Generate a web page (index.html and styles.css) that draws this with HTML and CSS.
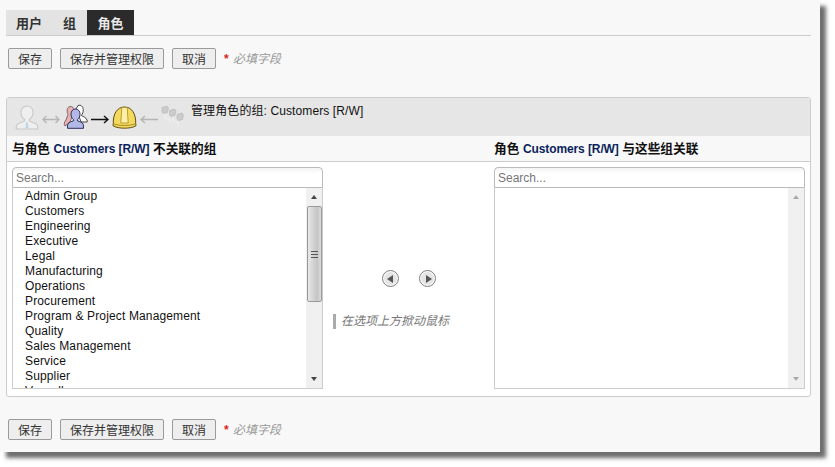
FILE: index.html
```html
<!DOCTYPE html>
<html lang="zh">
<head>
<meta charset="utf-8">
<title>管理角色的组</title>
<link rel="stylesheet" href="styles.css">
</head>
<body>
<div class="page">
  <div class="tabs">
    <a class="tab tab-users">用户</a>
    <a class="tab tab-groups">组</a>
    <a class="tab tab-active">角色</a>
  </div>
  <div class="actions actions-top">
    <button class="btn btn-s">保存</button>
    <button class="btn btn-l">保存并管理权限</button>
    <button class="btn btn-s">取消</button>
    <span class="req"><span class="star">*</span><em>必填字段</em></span>
  </div>
  <section class="panel">
    <header class="panel-head">
      <div class="icons">
        <svg class="ic" width="24" height="25" viewBox="0 0 24 25"><path d="M12 1c3.800 0 6 3 6 6.500 0 3-1.700 5.600-3.600 6.800v1.800c2.200.9 7.200 2 8 4.400.3 1 .4 2.200.4 3.500H1.200c0-1.300.1-2.500.4-3.500.8-2.400 5.800-3.500 8-4.400v-1.800C7.700 13.100 6 10.500 6 7.500 6 4 8.200 1 12 1z" fill="#efefef" stroke="#c8c8c8" stroke-width="1.100"/><path d="M11 17.500h2l.5 6h-3z" fill="#bcd6ea"/></svg>
        <svg class="ic ic-arrow" width="18" height="9" viewBox="0 0 18 9"><path d="M4.500 1 1 4.500 4.500 8M13.500 1 17 4.500 13.500 8M1 4.500h16" fill="none" stroke="#b5b5b5" stroke-width="1.300"/></svg>
        <svg class="ic" width="25" height="26" viewBox="0 0 25 26"><path d="M5 10.500C3.500 8 3.800 3 7 2.500c2.500-.4 4 1.500 4 4l-3 9c-1 2.500-3 4.500-6 6.500-1.500-2-.5-4.500 1-6z" fill="#eeb0ae" stroke="#555" stroke-width=".8"/><path d="M15 1.500c3-1 5 1 5.200 4 .2 2.500-.6 4.500-2 6 2 1 5 2 5.800 4.500.3 1 .3 1.500.2 2h-6L13 5z" fill="#fff" stroke="#333" stroke-width=".9"/><path d="M12.500 5c3 0 4.500 2.500 4.500 5.200 0 2.300-1 4.300-2.500 5.300v1.300c2 .7 5 1.500 5.700 3.500.3 1 .3 2.500.3 4H4.500c0-1.500 0-3 .3-4 .7-2 3.700-2.800 5.700-3.500v-1.300C9 14.500 8 12.500 8 10.200 8 7.500 9.500 5 12.500 5z" fill="#b3b9e6" stroke="#2b2e5c" stroke-width="1"/></svg>
        <svg class="ic ic-arrow" width="18" height="9" viewBox="0 0 18 9"><path d="M13 1l4 3.500L13 8M0 4.500h16.500" fill="none" stroke="#111" stroke-width="1.400"/></svg>
        <svg class="ic" width="25" height="23" viewBox="0 0 25 23"><path d="M1.300 17.500C1 8 5 1 12.500 1S24 8 23.700 17.500c.4 1 .3 2 0 2.500-3 1.500-7 2.200-11.200 2.200S4.300 21.500 1.300 20c-.3-.5-.4-1.500 0-2.500z" fill="#f3d95e" stroke="#5f4e10" stroke-width="1"/><path d="M9.800 1.500h5.400l1 15.500H8.800z" fill="#fdf0a6" stroke="#a88f24" stroke-width=".8"/><path d="M2 18c5.500 2 15.500 2 21 0" fill="none" stroke="#a88f24" stroke-width="1"/></svg>
        <svg class="ic ic-arrow" width="18" height="9" viewBox="0 0 18 9"><path d="M5 1 1 4.500 5 8M1.500 4.500H18" fill="none" stroke="#b5b5b5" stroke-width="1.300"/></svg>
        <svg class="ic" width="24" height="24" viewBox="0 0 24 24"><g fill="#cbcbcb" stroke="#b5b5b5" stroke-width=".6"><path d="M1 2.500 6 1l1.500 2-1 4.500-4 1L1 7z"/><path d="M8.500 5.500l5-1.500 1.500 2-1 4.500-4 1-1.500-1.500z"/><path d="M16 9.500l5-1.500 1.500 2-1 4.500-4 1-1.500-1.500z"/></g><path d="M4 9v4l5 2v3M12 12v4l5 2v4" fill="none" stroke="#ededed" stroke-width="1.500"/></svg>
      </div>
      <h2 class="panel-title">管理角色的组: Customers [R/W]</h2>
    </header>
    <div class="col-titles">
      <h3>与角色 <span class="navy">Customers [R/W]</span> 不关联的组</h3>
      <h3>角色 <span class="navy">Customers [R/W]</span> 与这些组关联</h3>
    </div>
    <div class="shuttle">
      <div class="picker">
        <input class="search" type="text" placeholder="Search...">
        <div class="listbox">
          <ul class="items">
            <li>Admin Group</li>
            <li>Customers</li>
            <li>Engineering</li>
            <li>Executive</li>
            <li>Legal</li>
            <li>Manufacturing</li>
            <li>Operations</li>
            <li>Procurement</li>
            <li>Program &amp; Project Management</li>
            <li>Quality</li>
            <li>Sales Management</li>
            <li>Service</li>
            <li>Supplier</li>
            <li>Vassall</li>
          </ul>
          <div class="scrollbar">
            <span class="sb-arrow sb-up"></span>
            <div class="thumb"><span class="grip"></span></div>
            <span class="sb-arrow sb-down"></span>
          </div>
        </div>
      </div>
      <div class="mover">
        <div class="move-btns">
          <span class="round"><span class="tri tri-left"></span></span>
          <span class="round"><span class="tri tri-right"></span></span>
        </div>
        <p class="hint">在选项上方掀动鼠标</p>
      </div>
      <div class="picker">
        <input class="search" type="text" placeholder="Search...">
        <div class="listbox">
          <ul class="items"></ul>
          <div class="scrollbar scrollbar-off">
            <span class="sb-arrow sb-up"></span>
            <span class="sb-arrow sb-down"></span>
          </div>
        </div>
      </div>
    </div>
  </section>
  <div class="actions actions-bottom">
    <button class="btn btn-s">保存</button>
    <button class="btn btn-l">保存并管理权限</button>
    <button class="btn btn-s">取消</button>
    <span class="req"><span class="star">*</span><em>必填字段</em></span>
  </div>
</div>
</body>
</html>
```
FILE: styles.css
```css
* { box-sizing: border-box; }
html, body { margin: 0; padding: 0; background: #fff; }
body {
  width: 835px;
  height: 467px;
  overflow: hidden;
  font-family: "Liberation Sans", "Noto Sans CJK SC", sans-serif;
  font-size: 12px;
  color: #222;
}
.page {
  width: 820px;
  height: 452px;
  padding: 10px 9px 0 6px;
  background: #f8f8f8;
  box-shadow: 6px 6px 4px #6e6e6e;
}
.tabs {
  display: flex;
  height: 26px;
  border-bottom: 1px solid #ccc;
}
.tab {
  display: flex;
  align-items: center;
  justify-content: center;
  height: 25px;
  font-size: 13px;
  font-weight: bold;
  color: #333;
  background: #e3e3e3;
}
.tab-users { width: 46px; }
.tab-groups { width: 35px; }
.tab-active { width: 47px; background: #2b2b2b; color: #e8e8e8; }
.actions {
  display: flex;
  align-items: center;
  height: 21px;
  padding-left: 2px;
  gap: 8px;
}
.actions-top { margin-top: 12px; }
.actions-bottom { margin-top: 22px; }
.btn {
  height: 21px;
  padding: 3px 0 0;
  border: 1px solid #9a9a9a;
  border-radius: 2px;
  background: #eee;
  color: #333;
  font-family: inherit;
  font-size: 12px;
  line-height: 15px;
}
.btn-s { width: 44px; }
.btn-l { width: 104px; }
.req { display: flex; align-items: center; color: #999; }
.star { color: #d22; font-weight: bold; width: 9px; }
.req em { font-style: italic; font-size: 12px; line-height: 15px; margin-top: 2px; color: #999; }
.panel {
  height: 300px;
  margin-top: 28px;
  border: 1px solid #ccc;
  border-radius: 3px;
  background: #fff;
}
.panel-head {
  display: flex;
  height: 38px;
  padding: 6px 0 0 8px;
  background: #e6e6e6;
  border-radius: 2px 2px 0 0;
}
.icons { display: flex; align-items: center; height: 26px; gap: 3px; }
.ic { flex: none; display: block; }
.ic-arrow { margin-top: 5px; }
.panel-title {
  margin: 0 0 0 6px;
  font-size: 12px;
  font-weight: normal;
  line-height: 15px;
  letter-spacing: .1px;
  color: #111;
}
.col-titles {
  display: grid;
  grid-template-columns: 482px 1fr;
  height: 26px;
  padding: 5px 5px 0;
  background: #f8f8f8;
  border-bottom: 1px solid #ccc;
}
.col-titles h3 {
  margin: 0;
  font-size: 12.700px;
  font-weight: bold;
  line-height: 17px;
  color: #111;
}
.navy { color: #0b1f5c; font-size: 12px; letter-spacing: -.1px; }
.shuttle {
  display: grid;
  grid-template-columns: 311px 171px 311px;
  padding: 5px 5px 0;
}
.picker { display: flex; flex-direction: column; }
.search {
  display: block;
  width: 311px;
  height: 21px;
  padding: 0 3px;
  border: 1px solid #bbb;
  border-radius: 4px 4px 0 0;
  background: linear-gradient(#f4f4f4, #fff 30%);
  font-family: inherit;
  font-size: 12px;
  outline: none;
}
.search::placeholder { color: #777; opacity: 1; }
.listbox {
  display: flex;
  height: 201px;
  border: 1px solid #ccc;
  border-top: 0;
  overflow: hidden;
}
.items {
  flex: 1;
  margin: 0;
  padding: 1px 0 0 12px;
  list-style: none;
  overflow: hidden;
  letter-spacing: .14px;
  color: #111;
}
.items li { height: 15px; line-height: 15px; white-space: nowrap; }
.scrollbar {
  display: flex;
  flex-direction: column;
  align-items: center;
  flex: none;
  width: 16px;
  background: #f0f0f0;
}
.sb-arrow {
  flex: none;
  width: 0;
  height: 0;
  margin: 7px 0;
  border-left: 3.500px solid transparent;
  border-right: 3.500px solid transparent;
}
.sb-up { border-bottom: 4px solid #444; }
.sb-down { border-top: 4px solid #444; margin-top: auto; }
.scrollbar-off .sb-up { border-bottom-color: #aaa; }
.scrollbar-off .sb-down { border-top-color: #aaa; }
.thumb {
  display: flex;
  align-items: center;
  justify-content: center;
  width: 15px;
  height: 96px;
  border: 1px solid #999;
  border-radius: 2px;
  background: linear-gradient(90deg, #e8e8e8, #c4c4c4 70%, #dcdcdc);
}
.grip {
  width: 7px;
  height: 7px;
  background: repeating-linear-gradient(#555 0 1px, transparent 1px 3px);
}
.mover {
  display: flex;
  flex-direction: column;
  padding: 103px 0 0 10px;
}
.move-btns { display: flex; gap: 20px; padding-left: 49px; }
.round {
  display: flex;
  align-items: center;
  justify-content: center;
  width: 17px;
  height: 17px;
  border: 1px solid #808080;
  border-radius: 50%;
  background: #e4e4e4;
  box-shadow: inset 0 0 0 1px #fff;
}
.tri { width: 0; height: 0; border-top: 4.500px solid transparent; border-bottom: 4.500px solid transparent; }
.tri-left { border-right: 6px solid #555; margin-right: 2px; }
.tri-right { border-left: 6px solid #555; margin-left: 2px; }
.hint {
  margin: 27px 0 0;
  height: 15px;
  padding-left: 5px;
  border-left: 3px solid #aaa;
  font-size: 12px;
  font-style: italic;
  line-height: 15px;
  color: #777;
}
```
